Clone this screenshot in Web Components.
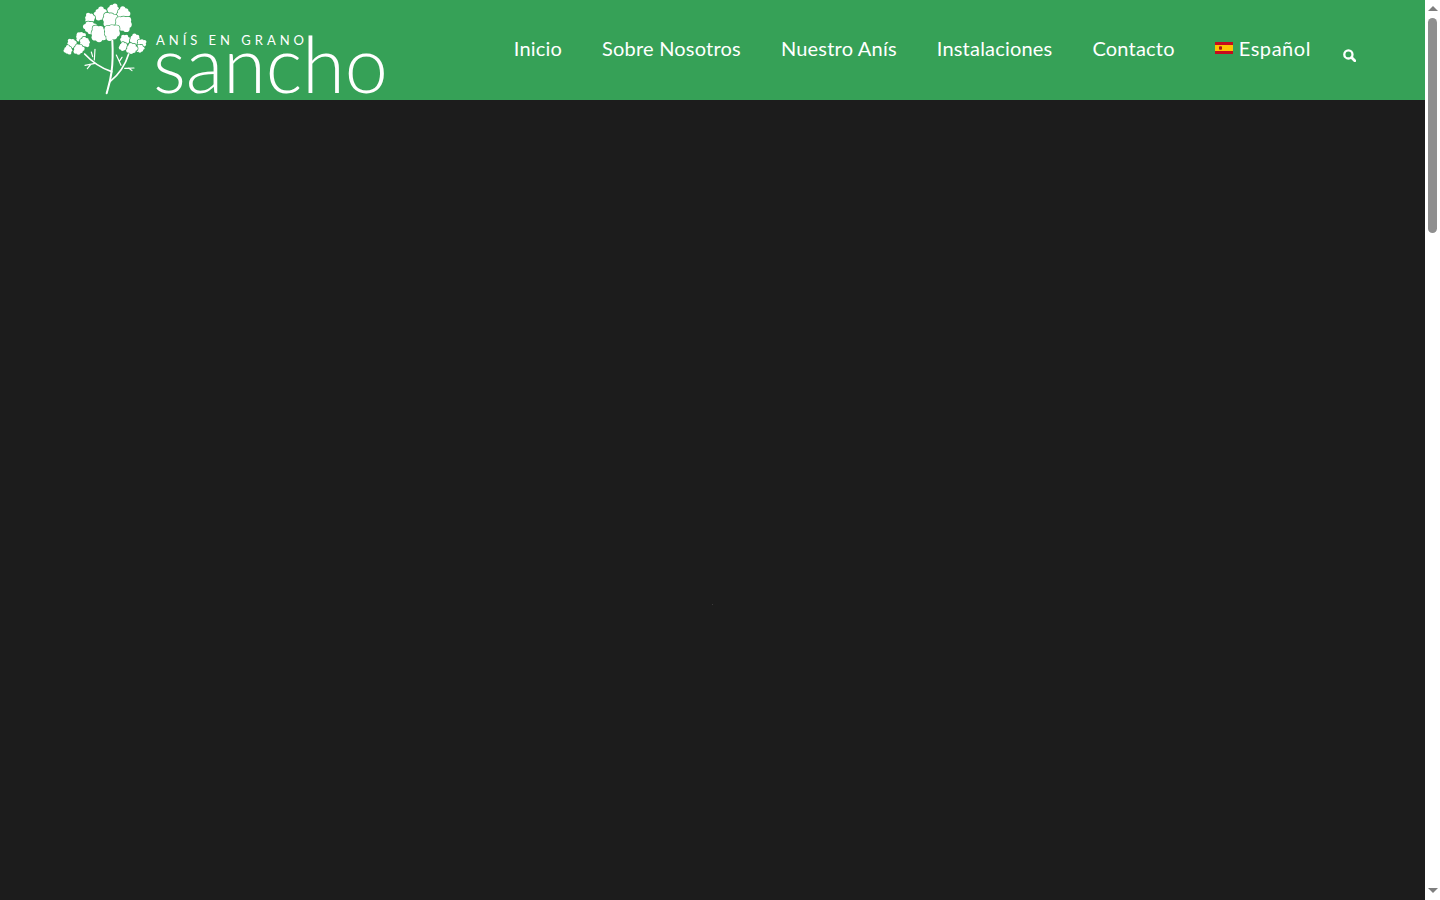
<!DOCTYPE html>
<html lang="es"><head><meta charset="utf-8"><title>Sancho</title>
<style>html,body{margin:0;height:100%;overflow:hidden;background:#1c1c1c}</style></head>
<body>
<app-page>
  <site-header>
    <site-logo slot="logo"></site-logo>
    <nav-link>Inicio</nav-link>
    <nav-link>Sobre Nosotros</nav-link>
    <nav-link>Nuestro Anís</nav-link>
    <nav-link>Instalaciones</nav-link>
    <nav-link>Contacto</nav-link>
    <nav-link flag>Español</nav-link>
    <search-button slot="search"></search-button>
  </site-header>
  <hero-area></hero-area>
  <page-scrollbar slot="scrollbar"></page-scrollbar>
</app-page>
<script>
function def(name, html, init){
  customElements.define(name, class extends HTMLElement{
    constructor(){super();this.attachShadow({mode:'open'}).innerHTML=html;if(init)init(this)}
  });
}
def('app-page',`<style>:host{display:flex;height:100vh;width:100%;overflow:hidden}
.m{flex:1;min-width:0;display:flex;flex-direction:column}</style>
<div class="m"><slot></slot></div><slot name="scrollbar"></slot>`);

def('site-header',`<style>:host{display:flex;flex:none;height:100px;background:#36a157;align-items:flex-start;padding:0 69px 0 63px;font-family:Lato,sans-serif;color:#fff}
nav{display:flex;margin-left:auto;align-items:center;height:95px}
.s{margin-left:12px;display:flex;align-items:center;height:110px}</style>
<slot name="logo"></slot><nav><slot></slot></nav><div class="s"><slot name="search"></slot></div>`);

function floret(x,y,r){
  let c='';
  for(let i=0;i<7;i++){const a=i*Math.PI*2/7+x;const k=.6+.12*Math.sin(i*2.3+y);c+=`<circle cx="${(x+Math.cos(a)*r*k).toFixed(1)}" cy="${(y+Math.sin(a)*r*k).toFixed(1)}" r="${(r*.42).toFixed(1)}"/>`}
  c+=`<circle cx="${x}" cy="${y}" r="${(r*.62).toFixed(1)}"/>`;
  return `<g fill="#36a157" stroke="#36a157" stroke-width="4">${c}</g><g fill="#fff">${c}</g>`;
}
const big=[[190,30,18],[152,42,20],[220,40,19],[120,55,16],[120,82,19],[180,59,22],[221,71,24],[146,101,24],[186,97,24]];
const left=[[92,110,15],[66,131,15],[105,127,15],[54,150,13],[86,148,16]];
const right=[[225,120,15],[255,118,16],[275,131,14],[220,140,13],[270,146,12],[245,146,16]];
const fl=[...big,...left,...right].map(f=>floret(...f)).join('');
def('site-logo',`<style>:host{display:block;width:323px;height:100px;flex:none;overflow:visible}svg{display:block;overflow:visible}
text{fill:#fff;font-family:Lato,sans-serif}</style>
<svg width="323" height="100" viewBox="63 0 323 100">
<g transform="translate(50 0) scale(.3333)">${fl}
<g fill="none" stroke="#fff" stroke-linecap="round">
<path d="M170 280C178 250 192 215 187 122" stroke-width="6"/>
<path d="M185 215C155 205 130 190 104 162" stroke-width="5"/>
<path d="M180 245C205 225 226 195 236 162" stroke-width="5"/>
<path d="M135 190L105 196M122 194L112 206M133 180L135 148M128 170L124 156M224 205L252 204M236 204L246 212M213 196L199 165M208 184L216 172" stroke-width="3.5"/>
</g></g>
<text x="156" y="45" font-size="13" font-weight="400" textLength="148" lengthAdjust="spacing">ANÍS EN GRANO</text>
<text x="153" y="93" font-size="79" font-weight="300" textLength="235" lengthAdjust="spacingAndGlyphs">sancho</text>
</svg>`);

def('nav-link',`<style>:host{display:block;padding:0 20px;font:400 20px/24px Lato,sans-serif;letter-spacing:.2px;color:#fff;white-space:nowrap}
:host([flag]){letter-spacing:.55px}
a{display:flex;align-items:center;color:inherit;text-decoration:none}
svg{display:none;margin-right:6px;flex:none}
:host([flag]) svg{display:block}</style>
<a href="#"><svg width="18" height="12" viewBox="0 0 18 12"><rect width="18" height="12" fill="#c60b1e"/><rect y="3" width="18" height="6" fill="#ffc400"/><rect x="4" y="4.2" width="3" height="3.6" rx=".8" fill="#ad1519"/></svg><slot></slot></a>`);

def('search-button',`<style>:host{display:block;width:13px;height:13px;flex:none}svg{display:block}</style>
<svg width="13" height="13" viewBox="0 0 13 13" fill="none" stroke="#fff"><circle cx="5.4" cy="5.4" r="4.1" stroke-width="2.3"/><path d="M8.6 8.6L11.8 11.8" stroke-width="2.8" stroke-linecap="round"/></svg>`);

def('hero-area',`<style>:host{display:block;flex:1;position:relative;background:#1c1c1c}
i{position:absolute;left:712px;top:504px;width:1px;height:1px;background:#3a3a3a}</style><i></i>`);

def('page-scrollbar',`<style>:host{display:flex;flex-direction:column;align-items:center;justify-content:space-between;flex:none;width:15px;height:100vh;background:#fff;position:relative}
.u,.d{width:0;height:0;border-left:5px solid transparent;border-right:5px solid transparent;flex:none}
.u{border-bottom:5px solid #7e7e7e;margin-top:6px}
.d{border-top:5px solid #7e7e7e;margin-bottom:7px}
.t{position:absolute;left:3px;top:18px;width:9px;height:215px;border-radius:5px;background:#8f8f8f}</style>
<div class="u"></div><div class="t"></div><div class="d"></div>`);
</script>
</body></html>
